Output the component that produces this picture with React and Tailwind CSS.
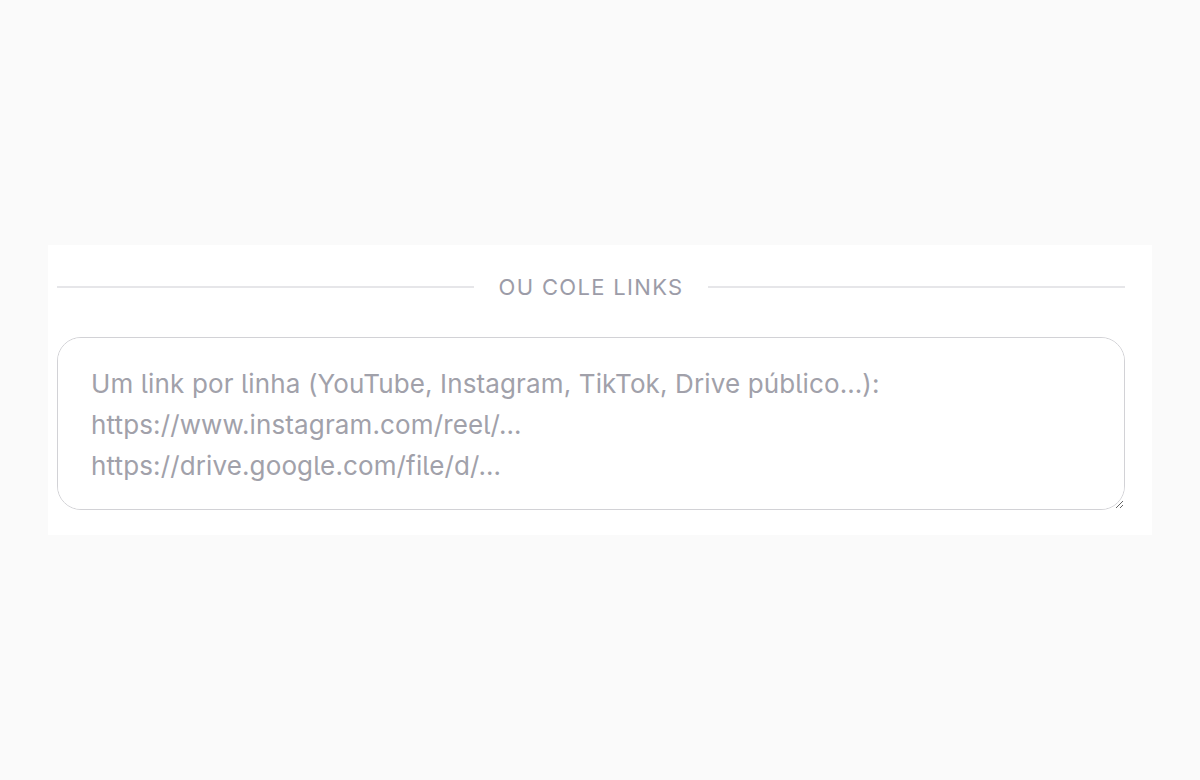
import React from "react";

const App = () => {
  return (
    <div
      className="min-h-screen bg-[#fafafa] flex items-center justify-center [font-feature-settings:'cv05']"
      style={{ fontFamily: "Inter, 'Noto Sans', sans-serif" }}
    >
      <div className="w-[1104px] bg-white pl-[9px] pr-[27px] pt-[29px] pb-[25px]">
        <div className="flex items-center gap-[25px] h-[26px]">
          <div className="flex-1 h-[2px] bg-[#e6e6e9]"></div>
          <span className="text-[22px] text-[#9c9ca8] uppercase tracking-[0.06em] leading-none">
            Ou cole links
          </span>
          <div className="flex-1 h-[2px] bg-[#e6e6e9]"></div>
        </div>
        <textarea
          className="mt-[37px] block w-full h-[173px] rounded-[24px] border-[1.5px] border-[#d2d2d6] bg-white px-[33px] py-[25px] text-[26px] leading-[41px] tracking-[0.005em] text-[#52525b] placeholder:text-[#a1a1aa] outline-none resize-y [font-feature-settings:'cv05']"
          placeholder={
            "Um link por linha (YouTube, Instagram, TikTok, Drive público…):\nhttps://www.instagram.com/reel/…\nhttps://drive.google.com/file/d/…"
          }
        ></textarea>
      </div>
    </div>
  );
};

export default App;
